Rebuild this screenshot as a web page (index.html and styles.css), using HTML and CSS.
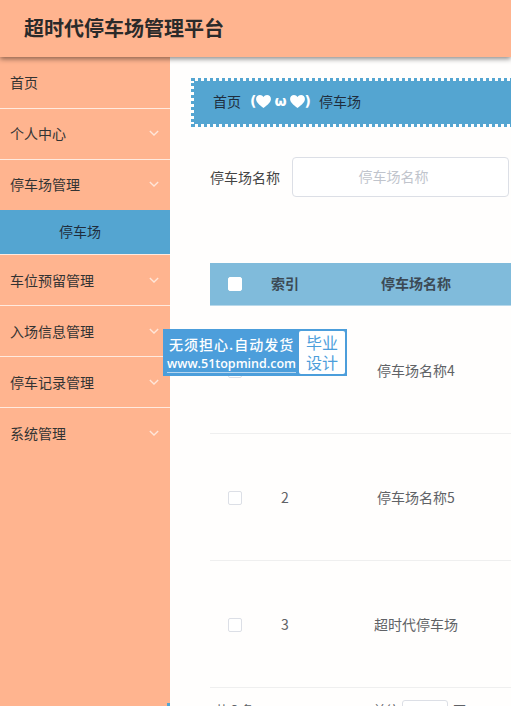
FILE: index.html
```html
<!DOCTYPE html>
<html lang="zh-CN">
<head>
<meta charset="utf-8">
<title>超时代停车场管理平台</title>
<link rel="stylesheet" href="styles.css">
</head>
<body>
<div class="app">
  <header class="topbar"><h1 class="brand">超时代停车场管理平台</h1></header>
  <div class="body-row">
    <nav class="sidebar">
      <div class="menu-item">首页</div>
      <div class="menu-item">个人中心<svg class="chev" viewBox="0 0 12 7"><path d="M1 1l5 5 5-5"/></svg></div>
      <div class="menu-item">停车场管理<svg class="chev" viewBox="0 0 12 7"><path d="M1 1l5 5 5-5"/></svg></div>
      <div class="menu-sub">停车场</div>
      <div class="menu-item">车位预留管理<svg class="chev" viewBox="0 0 12 7"><path d="M1 1l5 5 5-5"/></svg></div>
      <div class="menu-item">入场信息管理<svg class="chev" viewBox="0 0 12 7"><path d="M1 1l5 5 5-5"/></svg></div>
      <div class="menu-item">停车记录管理<svg class="chev" viewBox="0 0 12 7"><path d="M1 1l5 5 5-5"/></svg></div>
      <div class="menu-item">系统管理<svg class="chev" viewBox="0 0 12 7"><path d="M1 1l5 5 5-5"/></svg></div>
      <span class="corner"></span>
    </nav>
    <main class="content">
      <div class="crumb">
        <span>首页</span>
        <span class="face"><span>(</span><svg class="heart" viewBox="0 0 16 14"><path d="M8 14C3 10 0 7.500 0 4.200 0 1.700 2 0 4.200 0 5.800 0 7.200.8 8 2.200 8.800.8 10.200 0 11.800 0 14 0 16 1.700 16 4.200 16 7.500 13 10 8 14z"/></svg><span class="omega">ω</span><svg class="heart" viewBox="0 0 16 14"><path d="M8 14C3 10 0 7.500 0 4.200 0 1.700 2 0 4.200 0 5.800 0 7.200.8 8 2.200 8.800.8 10.200 0 11.800 0 14 0 16 1.700 16 4.200 16 7.500 13 10 8 14z"/></svg><span>)</span></span>
        <span>停车场</span>
      </div>
      <div class="search">
        <label class="search-label">停车场名称</label>
        <div class="search-input">停车场名称</div>
      </div>
      <div class="table">
        <div class="row head">
          <div class="c-check"><span class="box box-head"></span></div>
          <div class="c-idx">索引</div>
          <div class="c-name">停车场名称</div>
        </div>
        <div class="row">
          <div class="c-check"><span class="box"></span></div>
          <div class="c-idx">1</div>
          <div class="c-name">停车场名称4</div>
        </div>
        <div class="row">
          <div class="c-check"><span class="box"></span></div>
          <div class="c-idx">2</div>
          <div class="c-name">停车场名称5</div>
        </div>
        <div class="row">
          <div class="c-check"><span class="box"></span></div>
          <div class="c-idx">3</div>
          <div class="c-name">超时代停车场</div>
        </div>
      </div>
      <div class="pager">
        <span class="total">共 3 条</span>
        <span class="goto">前往</span>
        <span class="page-input"></span>
        <span class="goto">页</span>
      </div>
    </main>
  </div>
  <aside class="badge">
    <div class="badge-left">
      <div class="badge-title">无须担心.自动发货</div>
      <div class="badge-url">www.51topmind.com</div>
    </div>
    <div class="badge-right">毕业<br>设计</div>
  </aside>
</div>
</body>
</html>
```
FILE: styles.css
```css
* { box-sizing: border-box; }
html, body { margin: 0; padding: 0; height: 100%; overflow: hidden; }
body { font-family: "Noto Sans CJK SC", "Liberation Sans", sans-serif; color: #333; background: #fff; }
.app { position: relative; width: 511px; height: 706px; overflow: hidden; display: flex; flex-direction: column; }
.topbar { flex: 0 0 57px; height: 57px; background: #ffb48f; box-shadow: 0 2px 5px rgba(0,0,0,.45); display: flex; align-items: center; padding: 0 0 2px 24px; position: relative; z-index: 2; }
.brand { margin: 0; font-size: 20px; font-weight: 700; color: #2a2a2a; line-height: 1; }
.body-row { flex: 1; display: flex; min-height: 0; }
.sidebar { flex: 0 0 170px; background: #ffb48f; position: relative; padding-top: 1px; }
.menu-item { height: 51px; padding: 0 11px 2px 10px; font-size: 14px; color: #333; display: flex; align-items: center; justify-content: space-between; border-bottom: 1px solid #ffeadf; }
.menu-sub ~ .menu-item { padding-bottom: 0; }
.menu-item:last-of-type { border-bottom-color: transparent; }
.menu-sub { height: 44px; margin-top: -1px; background: #54a5d1; font-size: 14px; color: #1f2d3d; text-align: center; line-height: 43px; padding-right: 10px; }
.menu-sub + .menu-item { border-top: 1px solid #ffeadf; height: 52px; }
.chev { width: 10px; height: 6px; fill: none; stroke: #ffe6d9; stroke-width: 1.6; }
.corner { position: absolute; right: 0; bottom: 0; width: 3px; height: 3px; background: #54a5d1; }
.content { flex: 1; min-width: 0; overflow: hidden; background: #fffefd; padding: 21px 0 0 40px; }
.crumb { margin-left: -19px; height: 49px; width: 360px; border: 3px dotted #54a5d1; background: #54a5d1; background-clip: padding-box; display: flex; align-items: center; gap: 8px; padding: 0 0 3px 19px; font-size: 14px; color: #1f2d3d; }
.crumb > :first-child { margin-right: 1px; }
.face { color: #fff; font-weight: 700; display: inline-flex; align-items: center; font-family: "DejaVu Sans", sans-serif; font-size: 14px; }
.omega { padding: 0 3px; }
.heart { width: 15px; height: 13px; fill: #fff; }
.search { display: flex; align-items: center; margin-top: 30px; height: 40px; }
.search-label { width: 70px; font-size: 14px; color: #444; margin-right: 12px; white-space: nowrap; padding-bottom: 1px; }
.search-input { flex: 0 0 217px; height: 40px; border: 1px solid #dcdfe6; border-radius: 4px; background: #fff; color: #c0c4cc; font-size: 14px; display: flex; align-items: center; justify-content: center; padding: 0 14px 2px 0; }
.table { margin-top: 66px; width: 400px; }
.row { display: flex; align-items: center; height: 127px; padding-top: 2px; border-bottom: 1px solid #efefef; font-size: 14px; color: #606266; }
.row.head { height: 43px; padding-top: 0; background: #80bbdb; font-weight: 700; color: #3c4a55; border-bottom: 1px solid #b8d8ea; margin-bottom: 1px; }
.c-check { flex: 0 0 50px; display: flex; justify-content: center; }
.c-idx { flex: 0 0 50px; text-align: center; padding-bottom: 2px; }
.c-name { flex: 0 0 212px; text-align: center; padding-bottom: 2px; }
.box { width: 14px; height: 14px; border: 1px solid #dcdfe6; border-radius: 2px; background: #fff; display: block; }
.box-head { border-color: #fff; }
.pager { margin: 12px 0 0 5px; display: flex; align-items: flex-start; font-size: 13px; color: #606266; }
.total { width: 158px; }
.page-input { width: 46px; height: 28px; margin: 0 5px 0 3px; border: 1px solid #dcdfe6; border-radius: 3px; background: #fff; }
.badge { position: absolute; left: 163px; top: 329px; width: 184px; height: 47px; background: #4c9edb; display: flex; align-items: center; padding: 2px; color: #fff; }
.badge-left { flex: 1; padding-left: 4px; white-space: nowrap; min-width: 0; }
.badge-title { font-size: 14px; line-height: 22px; font-weight: 500; letter-spacing: 1px; }
.badge-url { font-family: "Open Sans", sans-serif; font-size: 12.500px; line-height: 17px; font-weight: 600; border-bottom: 1px solid #b7d6ef; width: 129px; margin-left: -2px; letter-spacing: 0; }
.badge-right { flex: 0 0 46px; height: 43px; background: #fff; border-radius: 2px; color: #4c9edb; font-size: 16px; line-height: 20px; text-align: center; padding-top: 1px; }
```
